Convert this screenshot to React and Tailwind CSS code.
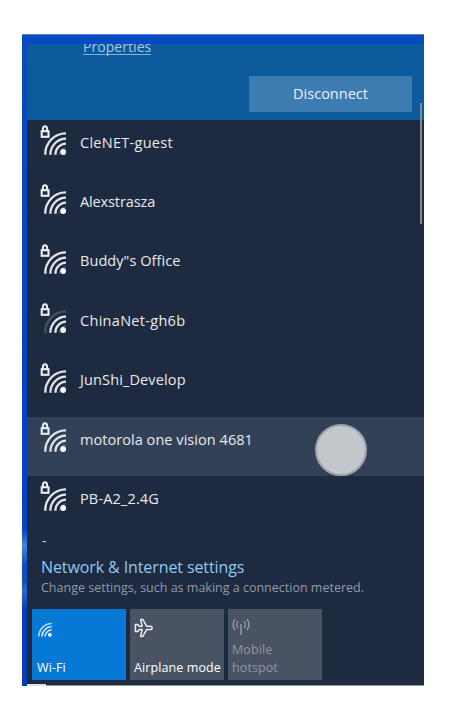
import React from "react";

const networks = [
  { name: "CleNET-guest", spacing: "tracking-[0.28px]" },
  { name: "Alexstrasza", spacing: "tracking-[-0.12px]" },
  { name: 'Buddy"s Office', spacing: "tracking-[0.06px]" },
  { name: "ChinaNet-gh6b", spacing: "tracking-[0.3px]", weak: true },
  { name: "JunShi_Develop", spacing: "tracking-[0.13px]" },
  { name: "motorola one vision 4681", spacing: "tracking-[0.05px]", active: true },
  { name: "PB-A2_2.4G", spacing: "tracking-[0.15px]" },
];

function SecuredWifi({ weak }) {
  return (
    <svg width="26" height="31" viewBox="0 0 26 31" fill="none" className="shrink-0">
      <path d="M2.9 6V3.8a2.1 2.5 0 0 1 4.2 0V6" stroke="#eceef1" strokeWidth="2" />
      <rect x="1.7" y="6.2" width="6.8" height="5.6" stroke="#eceef1" strokeWidth="2.1" />
      <g stroke="#e3e5ea" strokeWidth="2.3">
        <path d="M26 8.4A20.6 20.6 0 0 0 5.3 29.8" opacity={weak ? 0.22 : 1} />
        <path d="M26 13.6A15.8 15.8 0 0 0 10.4 29.8" />
        <path d="M26 18.6A11 11 0 0 0 15.4 29.8" />
        <path d="M26 22.8A6.6 6.6 0 0 0 19.6 29.8" strokeWidth="1" opacity="0.35" />
      </g>
      <circle cx="23.2" cy="27" r="2.9" fill="#fff" />
    </svg>
  );
}

function WifiIcon() {
  return (
    <svg width="16" height="17" viewBox="0 0 16 17" fill="none" stroke="#d9ecfc" strokeWidth="1.5">
      <path d="M14.6 2.4A13 13 0 0 0 1.9 15.6" opacity="0.85" />
      <path d="M14.6 5.6A10 10 0 0 0 5 15.6" />
      <path d="M14.6 8.8A7 7 0 0 0 8.1 15.6" />
      <circle cx="12.9" cy="13.8" r="1.9" fill="#fff" stroke="none" />
    </svg>
  );
}

function PlaneIcon() {
  return (
    <svg width="20" height="20" viewBox="0 0 20 20" fill="none" stroke="#eceef1" strokeWidth="1.5" strokeLinejoin="round">
      <path d="M1.4 6.4h2.4l1.3 1.8h3L6.6 1.4h2.2l3.8 6.8h3.6c1.1 0 1.9.8 1.9 1.7s-.8 1.7-1.9 1.7h-3.6l-3.8 6.9H6.6l1.5-6.9h-3l-1.3 1.9H1.4z" />
    </svg>
  );
}

function HotspotIcon() {
  return (
    <svg width="18" height="18" viewBox="0 0 18 18" fill="none" stroke="#979da8" strokeWidth="1.4">
      <path d="M3.2 1.2C.3 3.8.3 9.2 3.2 11.8M14.8 1.2c2.9 2.6 2.9 8 0 10.6M6 3.2c-1.7 1.8-1.7 4.8 0 6.6M12 3.2c1.7 1.8 1.7 4.8 0 6.6M9 6v11" />
    </svg>
  );
}

export default function App() {
  return (
    <div className="h-[720px] w-[450px] overflow-hidden bg-white pt-[34px] pl-[22px] font-['Open_Sans','Noto_Sans',sans-serif]">
      <div className="flex h-[652px] w-[402px] flex-col border-t border-[#5b83d4] bg-[linear-gradient(180deg,#064bc2_0px,#0343c4_400px,#0347c4_495px,#3f87dd_511px,#0b4fc4_530px,#0a4ec0_545px,#2a68cc_556px,#053db8_575px)] pl-[5px]">
        <div className="h-[9px] shrink-0" />
        <div className="relative flex min-h-0 flex-1 flex-col border-b border-[#8b94a3] bg-[#1e2a40]">
          <header className="flex h-[76px] shrink-0 flex-col overflow-hidden bg-[#0c599c]">
            <div className="-mt-[6px] ml-[56px] h-[38px]">
              <span className="block h-[17px] w-[68px] border-b border-[#86b4d8] text-[14px] leading-[18px] tracking-[0.05px] whitespace-nowrap text-[#a6c9e5]">
                Properties
              </span>
            </div>
            <button className="mr-3 h-[36px] w-[163px] self-end bg-[#3e7bb0] text-[14.5px] leading-[34px] text-[#eaf2f9]">
              Disconnect
            </button>
          </header>

          <div className="h-[432px] shrink-0 overflow-hidden">
            {networks.map((n) => (
              <div
                key={n.name}
                className={`flex h-[59.4px] items-start pl-[13px] ${n.active ? "bg-[#324157]" : ""}`}
              >
                <div className="pt-[5px]">
                  <SecuredWifi weak={n.weak} />
                </div>
                <span className={`ml-[14px] pt-[12.6px] text-[14.5px] leading-5 whitespace-nowrap text-[#e8eaee] ${n.spacing}`}>{n.name}</span>
              </div>
            ))}
            <div className="ml-[15px] h-4 text-[14px] leading-[10px] text-[#cfd3da]">-</div>
          </div>

          <footer className="flex flex-col">
            <a className="mt-[5px] ml-[14px] text-[16px] leading-5 tracking-[-0.1px] whitespace-nowrap text-[#8fc9f5]">Network &amp; Internet settings</a>
            <p className="mt-[3px] ml-[14px] text-[12.5px] leading-4 whitespace-nowrap text-[#929aa7]">
              Change settings, such as making a connection metered.
            </p>
            <div className="mt-[13px] ml-[5px] flex gap-1 text-[12.5px] leading-[18px] tracking-[0.1px]">
              <div className="flex h-[71px] w-[94px] flex-col justify-between bg-[#0679d7] pt-[12px] pb-[3px] pl-[5px] text-white">
                <WifiIcon />
                <span>Wi-Fi</span>
              </div>
              <div className="flex h-[71px] w-[94px] flex-col justify-between bg-[#4a5364] pt-[9px] pb-[3px] pl-[4px] text-white">
                <PlaneIcon />
                <span className="whitespace-nowrap">Airplane mode</span>
              </div>
              <div className="flex h-[71px] w-[94px] flex-col justify-between bg-[#4a5364] pt-[9px] pb-[3px] pl-[4px] text-[#8f96a2]">
                <HotspotIcon />
                <span>Mobile<br />hotspot</span>
              </div>
            </div>
          </footer>

          <div className="absolute top-[59px] right-[2px] h-[121px] w-[2px] bg-[#858b95]" />
          <div className="absolute top-[380px] left-[288px] h-[52px] w-[52px] rounded-full border-2 border-[#9da2ab] bg-[#c3c6cb]" />
          <div className="absolute -bottom-px left-0 h-[2px] w-[19px] bg-[#dfe2e6]" />
        </div>
      </div>
    </div>
  );
}
